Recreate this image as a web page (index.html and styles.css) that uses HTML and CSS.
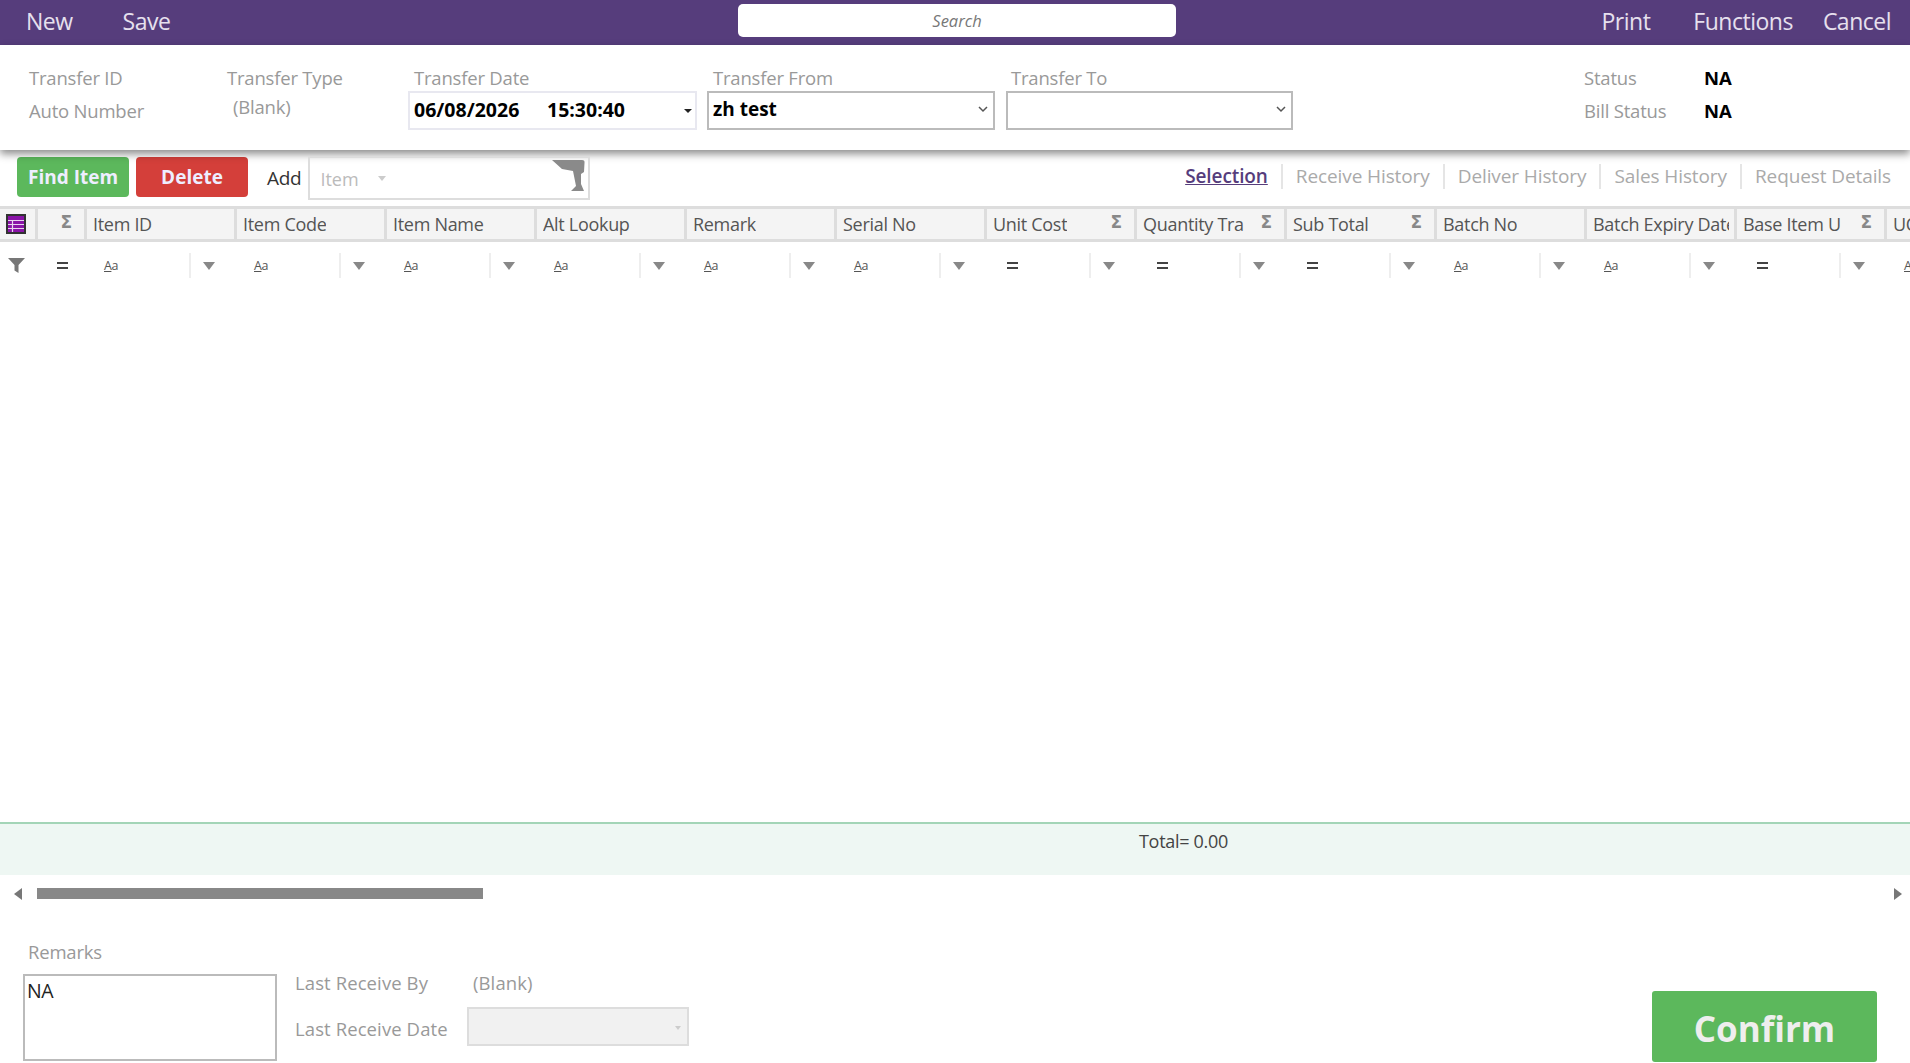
FILE: index.html
```html
<!DOCTYPE html>
<html lang="en">
<head>
    <meta charset="UTF-8">
    <title>Stock Transfer</title>
    <link rel="stylesheet" href="styles.css">
</head>
<body>

<header class="topbar">
    <div class="topbar-left">
        <a class="new-link">New</a>
        <a class="save-link">Save</a>
    </div>
    <div class="search">Search</div>
    <div class="topbar-right">
        <a class="print-link">Print</a>
        <a class="functions-link">Functions</a>
        <a>Cancel</a>
    </div>
</header>

<section class="info">
    <div class="info-col col-id">
        <div class="label">Transfer ID</div>
        <div class="label second">Auto Number</div>
    </div>
    <div class="info-col col-type">
        <div class="label">Transfer Type</div>
        <div class="label blank">(Blank)</div>
    </div>
    <div class="info-col col-date">
        <div class="label indent">Transfer Date</div>
        <div class="box box-date">
            <span class="date-part">06/08/2026</span>
            <span>15:30:40</span>
            <i class="caret"></i>
        </div>
    </div>
    <div class="info-col col-from">
        <div class="label indent">Transfer From</div>
        <div class="box box-select">
            <span>zh test</span>
            <svg class="chevron" width="10" height="7" viewBox="0 0 10 7"><path d="M1 1l4 4 4-4" fill="none" stroke="#555" stroke-width="1.5"/></svg>
        </div>
    </div>
    <div class="info-col col-to">
        <div class="label indent">Transfer To</div>
        <div class="box box-select">
            <span></span>
            <svg class="chevron" width="10" height="7" viewBox="0 0 10 7"><path d="M1 1l4 4 4-4" fill="none" stroke="#555" stroke-width="1.5"/></svg>
        </div>
    </div>
    <div class="info-col col-status">
        <div class="status-row"><span class="label status-label">Status</span><b>NA</b></div>
        <div class="status-row second"><span class="label status-label">Bill Status</span><b>NA</b></div>
    </div>
</section>

<section class="toolbar">
    <button class="btn btn-find">Find Item</button>
    <button class="btn btn-delete">Delete</button>
    <span class="add-label">Add</span>
    <div class="item-box">
        <span class="item-text">Item</span>
        <i class="item-caret"></i>
        <svg class="scanner" width="33" height="31" viewBox="0 0 33 31"><path d="M0 0H30Q33 0 32.500 3L32 12 29 14V24L32 31H19L24 26 21 11 10 9Z" fill="#8a8a8a"/></svg>
    </div>
    <nav class="tabs">
        <a class="tab active">Selection</a>
        <a class="tab">Receive History</a>
        <a class="tab">Deliver History</a>
        <a class="tab">Sales History</a>
        <a class="tab">Request Details</a>
    </nav>
</section>

<section class="grid">
    <div class="grid-head">
        <div class="head-cell cell-menu">
            <svg width="20" height="20" viewBox="0 0 20 20"><rect x="1" y="1" width="18" height="18" fill="#8a14a8" stroke="#333" stroke-width="2"/><path d="M2 6.500H18M2 10.500H18M2 14.500H18M6.500 6.500V18" stroke="#e9d4ef" stroke-width="1.200" fill="none"/></svg>
        </div>
        <div class="head-cell cell-sum"><span class="sigma">Σ</span></div>
        <div class="head-cell"><span class="head-text">Item ID</span></div>
        <div class="head-cell"><span class="head-text">Item Code</span></div>
        <div class="head-cell"><span class="head-text">Item Name</span></div>
        <div class="head-cell"><span class="head-text">Alt Lookup</span></div>
        <div class="head-cell"><span class="head-text">Remark</span></div>
        <div class="head-cell"><span class="head-text">Serial No</span></div>
        <div class="head-cell"><span class="head-text">Unit Cost</span><span class="sigma">Σ</span></div>
        <div class="head-cell"><span class="head-text">Quantity Tra</span><span class="sigma">Σ</span></div>
        <div class="head-cell"><span class="head-text">Sub Total</span><span class="sigma">Σ</span></div>
        <div class="head-cell"><span class="head-text">Batch No</span></div>
        <div class="head-cell"><span class="head-text">Batch Expiry Date</span></div>
        <div class="head-cell"><span class="head-text">Base Item U</span><span class="sigma">Σ</span></div>
        <div class="head-cell"><span class="head-text">UOM</span></div>
    </div>

    <div class="grid-filter">
        <div class="filter-cell cell-menu">
            <svg width="17" height="15" viewBox="0 0 17 15"><path d="M0 0H17L10.500 7V15L6.500 12.500V7Z" fill="#777"/></svg>
        </div>
        <div class="filter-cell cell-sum"><i class="equals"></i></div>
        <div class="filter-cell"><span class="op"><u>A</u>a</span><i class="sep"></i><i class="drop"></i></div>
        <div class="filter-cell"><span class="op"><u>A</u>a</span><i class="sep"></i><i class="drop"></i></div>
        <div class="filter-cell"><span class="op"><u>A</u>a</span><i class="sep"></i><i class="drop"></i></div>
        <div class="filter-cell"><span class="op"><u>A</u>a</span><i class="sep"></i><i class="drop"></i></div>
        <div class="filter-cell"><span class="op"><u>A</u>a</span><i class="sep"></i><i class="drop"></i></div>
        <div class="filter-cell"><span class="op"><u>A</u>a</span><i class="sep"></i><i class="drop"></i></div>
        <div class="filter-cell"><span class="op"><i class="equals"></i></span><i class="sep"></i><i class="drop"></i></div>
        <div class="filter-cell"><span class="op"><i class="equals"></i></span><i class="sep"></i><i class="drop"></i></div>
        <div class="filter-cell"><span class="op"><i class="equals"></i></span><i class="sep"></i><i class="drop"></i></div>
        <div class="filter-cell"><span class="op"><u>A</u>a</span><i class="sep"></i><i class="drop"></i></div>
        <div class="filter-cell"><span class="op"><u>A</u>a</span><i class="sep"></i><i class="drop"></i></div>
        <div class="filter-cell"><span class="op"><i class="equals"></i></span><i class="sep"></i><i class="drop"></i></div>
        <div class="filter-cell"><span class="op"><u>A</u>a</span><i class="sep"></i><i class="drop"></i></div>
    </div>
</section>

<section class="total">Total= 0.00</section>

<section class="scroller">
    <i class="arrow-left"></i>
    <div class="track"><div class="thumb"></div></div>
    <i class="arrow-right"></i>
</section>

<section class="bottom">
    <div class="remarks">
        <div class="label remarks-label">Remarks</div>
        <div class="remarks-box">NA</div>
    </div>
    <div class="receive">
        <div class="label">Last Receive By</div>
        <div class="label blank-value">(Blank)</div>
        <div class="label receive-date">Last Receive Date</div>
        <div class="disabled-box"><i class="disabled-caret"></i></div>
    </div>
    <button class="confirm">Confirm</button>
</section>

</body>
</html>
```

FILE: styles.css
```css
body {
    margin: 0;
    height: 1063px;
    overflow: hidden;
    background-color: white;
    font-family: "Open Sans", "Noto Sans", sans-serif;
    font-size: 18px;
    color: #333;
}

/* top bar */
.topbar {
    height: 45px;
    box-sizing: border-box;
    padding-bottom: 4px;
    background-color: #563d7c;
    color: #e6e0ee;
    font-size: 23px;
    display: flex;
    align-items: center;
    letter-spacing: -0.5px;
}

.topbar-left, .topbar-right {
    display: flex;
    flex: none;
    box-sizing: border-box;
}

.topbar-left {
    width: 480px;
    padding-left: 26px;
}

.topbar-right {
    margin-left: auto;
    padding-right: 19px;
}

.new-link {
    margin-right: 50px;
}

.print-link {
    margin-right: 43px;
}

.functions-link {
    margin-right: 30px;
}

.search {
    width: 438px;
    height: 33px;
    margin-left: 258px;
    background-color: white;
    border-radius: 5px;
    color: #777;
    font-size: 16.5px;
    font-style: italic;
    line-height: 33px;
    text-align: center;
    letter-spacing: 0;
}

/* transfer info */
.info {
    height: 105px;
    box-sizing: border-box;
    padding: 20px 0 0 29px;
    display: flex;
    position: relative;
    box-shadow: 0 4px 8px rgba(0, 0, 0, 0.45);
}

.label {
    color: #999;
    font-size: 18.5px;
    line-height: 26px;
    letter-spacing: -0.2px;
}

.second {
    margin-top: 7px;
}

.col-id { width: 198px; }
.col-type { width: 181px; }
.col-date { width: 299px; }
.col-from { width: 299px; }
.col-to { width: 578px; }

.blank {
    margin-top: 3px;
    padding-left: 6px;
}

.indent {
    padding-left: 6px;
}

.box {
    height: 39px;
    box-sizing: border-box;
    padding: 0 0 3px 4px;
    display: flex;
    align-items: center;
    color: black;
    font-weight: bold;
    font-size: 19.5px;
    background-color: white;
    position: relative;
}

.box-date {
    width: 289px;
    border: 2px solid #e8e8f0;
}

.date-part {
    width: 133px;
}

.box-select {
    width: 288px;
    border: 2px solid #bbb;
    justify-content: space-between;
    padding-right: 5px;
    font-size: 19px;
}

.col-to .box-select { width: 287px; }

.col-to .indent {
    padding-left: 5px;
}

.caret {
    position: absolute;
    right: 3px;
    top: 16px;
    border-left: 4px solid transparent;
    border-right: 4px solid transparent;
    border-top: 4px solid #222;
}

.status-row {
    display: flex;
    line-height: 26px;
}

.status-row b {
    color: black;
    font-size: 18.5px;
}

.status-label {
    width: 120px;
}

/* toolbar */
.toolbar {
    height: 56px;
    box-sizing: border-box;
    padding: 6px 6px 0 17px;
    display: flex;
    align-items: flex-start;
}

.btn {
    width: 112px;
    height: 40px;
    margin: 1px 7px 0 0;
    border: none;
    border-radius: 4px;
    color: #eef;
    font-family: inherit;
    font-size: 19px;
    font-weight: bold;
}

.btn-find { background-color: #5cb85c; }
.btn-delete { background-color: #d43f3a; }

.add-label {
    margin: 7px 7px 0 12px;
    font-size: 19px;
    line-height: 30px;
    letter-spacing: -0.3px;
}

.item-box {
    width: 282px;
    height: 44px;
    box-sizing: border-box;
    border: 2px solid #ddd;
    padding: 0 10px;
    display: flex;
    align-items: center;
    position: relative;
}

.item-text {
    color: #bbb;
    margin-top: 2px;
}

.item-caret {
    margin-left: 19px;
    border-left: 4px solid transparent;
    border-right: 4px solid transparent;
    border-top: 5px solid #ccc;
}

.scanner {
    position: absolute;
    right: 3px;
    top: 2px;
}

.tabs {
    margin-left: auto;
    display: flex;
    align-items: center;
    height: 25px;
    margin-top: 8px;
    color: #aaa;
    font-size: 19px;
    letter-spacing: -0.1px;
}

.tab {
    padding: 0 13px;
    border-left: 2px solid #e5e5e5;
    line-height: 25px;
}

.tab.active {
    border-left: none;
    color: #563d7c;
    font-weight: 600;
    text-decoration: underline;
}

/* grid */
.grid {
    height: 616px;
}

.grid-head {
    height: 36px;
    box-sizing: border-box;
    display: flex;
    overflow: hidden;
    border-top: 3px solid #ddd;
    border-bottom: 3px solid #ddd;
    background-color: #f4f4f4;
}

.head-cell {
    flex: none;
    width: 150px;
    box-sizing: border-box;
    border-right: 3px solid #ddd;
    padding-left: 7px;
    display: flex;
    align-items: center;
}

.head-cell:nth-child(n+3) {
    padding-left: 6px;
}

.cell-menu {
    width: 38px;
    padding-left: 6px;
}

.cell-sum {
    width: 49px;
    padding-left: 0;
}

.head-text {
    max-width: 136px;
    color: #555;
    font-size: 18px;
    white-space: nowrap;
    overflow: hidden;
    letter-spacing: -0.3px;
}

.sigma {
    color: #888;
    font-family: "DejaVu Sans", sans-serif;
    font-size: 17px;
    font-weight: bold;
    margin-left: auto;
    margin-right: 12px;
    margin-top: -4px;
}

.grid-filter {
    height: 25px;
    margin-top: 11px;
    display: flex;
    overflow: hidden;
}

.filter-cell {
    flex: none;
    width: 150px;
    display: flex;
    align-items: center;
}

.filter-cell.cell-menu {
    width: 38px;
    padding-left: 8px;
    box-sizing: border-box;
}

.filter-cell.cell-sum {
    width: 49px;
    padding-left: 19px;
    box-sizing: border-box;
}

.op {
    width: 102px;
    box-sizing: border-box;
    padding-left: 17px;
    font-size: 12.5px;
    color: #555;
    letter-spacing: -0.5px;
    line-height: 14px;
    display: flex;
    align-items: center;
}

.op .equals {
    margin-left: 3px;
}

.sep {
    width: 2px;
    height: 25px;
    background-color: #eee;
}

.drop {
    margin-left: 12px;
    border-left: 6px solid transparent;
    border-right: 6px solid transparent;
    border-top: 8px solid #888;
}

.equals {
    display: block;
    width: 11px;
    height: 3px;
    border-top: 2px solid #444;
    border-bottom: 2px solid #444;
}

/* total and scrollbar */
.total {
    height: 53px;
    box-sizing: border-box;
    border-top: 2px solid #a3d5b7;
    background-color: #eef7f3;
    padding: 5px 0 0 1139px;
    font-size: 18px;
    line-height: 24px;
    letter-spacing: -0.3px;
    color: #444;
}

.scroller {
    height: 39px;
    display: flex;
    align-items: center;
    padding: 0 8px 2px 14px;
    box-sizing: border-box;
}

.arrow-left {
    border-top: 6px solid transparent;
    border-bottom: 6px solid transparent;
    border-right: 8px solid #777;
}

.track {
    flex: 1;
    margin: 0 15px;
}

.thumb {
    width: 446px;
    height: 11px;
    background-color: #888;
}

.arrow-right {
    border-top: 6px solid transparent;
    border-bottom: 6px solid transparent;
    border-left: 8px solid #777;
}

/* bottom */
.bottom {
    height: 149px;
    display: flex;
    align-items: flex-start;
    padding-left: 23px;
}

.remarks {
    width: 254px;
    margin-top: 26px;
}

.remarks-label {
    padding-left: 5px;
    line-height: 24px;
}

.remarks-box {
    height: 87px;
    box-sizing: border-box;
    margin-top: 10px;
    border: 2px solid #bbb;
    padding: 2px;
    font-size: 19.5px;
    line-height: 26px;
    letter-spacing: -0.5px;
    color: #222;
}

.receive {
    margin: 57px 0 0 18px;
    display: grid;
    grid-template-columns: 172px 222px;
    grid-template-rows: 24px 39px;
    row-gap: 12px;
}

.receive .label {
    line-height: 24px;
    letter-spacing: 0.1px;
}

.blank-value {
    padding-left: 6px;
}

.receive-date {
    padding-top: 10px;
}

.disabled-box {
    height: 39px;
    box-sizing: border-box;
    border: 2px solid #ddd;
    background-color: #f1f1f1;
    position: relative;
}

.disabled-caret {
    position: absolute;
    right: 6px;
    top: 17px;
    border-left: 3px solid transparent;
    border-right: 3px solid transparent;
    border-top: 4px solid #ccc;
}

.confirm {
    width: 225px;
    height: 71px;
    margin: 77px 33px 0 auto;
    padding-top: 4px;
    border: none;
    border-radius: 3px;
    background-color: #5cb85c;
    color: #eee;
    font-family: inherit;
    font-size: 35px;
    font-weight: bold;
}
```
